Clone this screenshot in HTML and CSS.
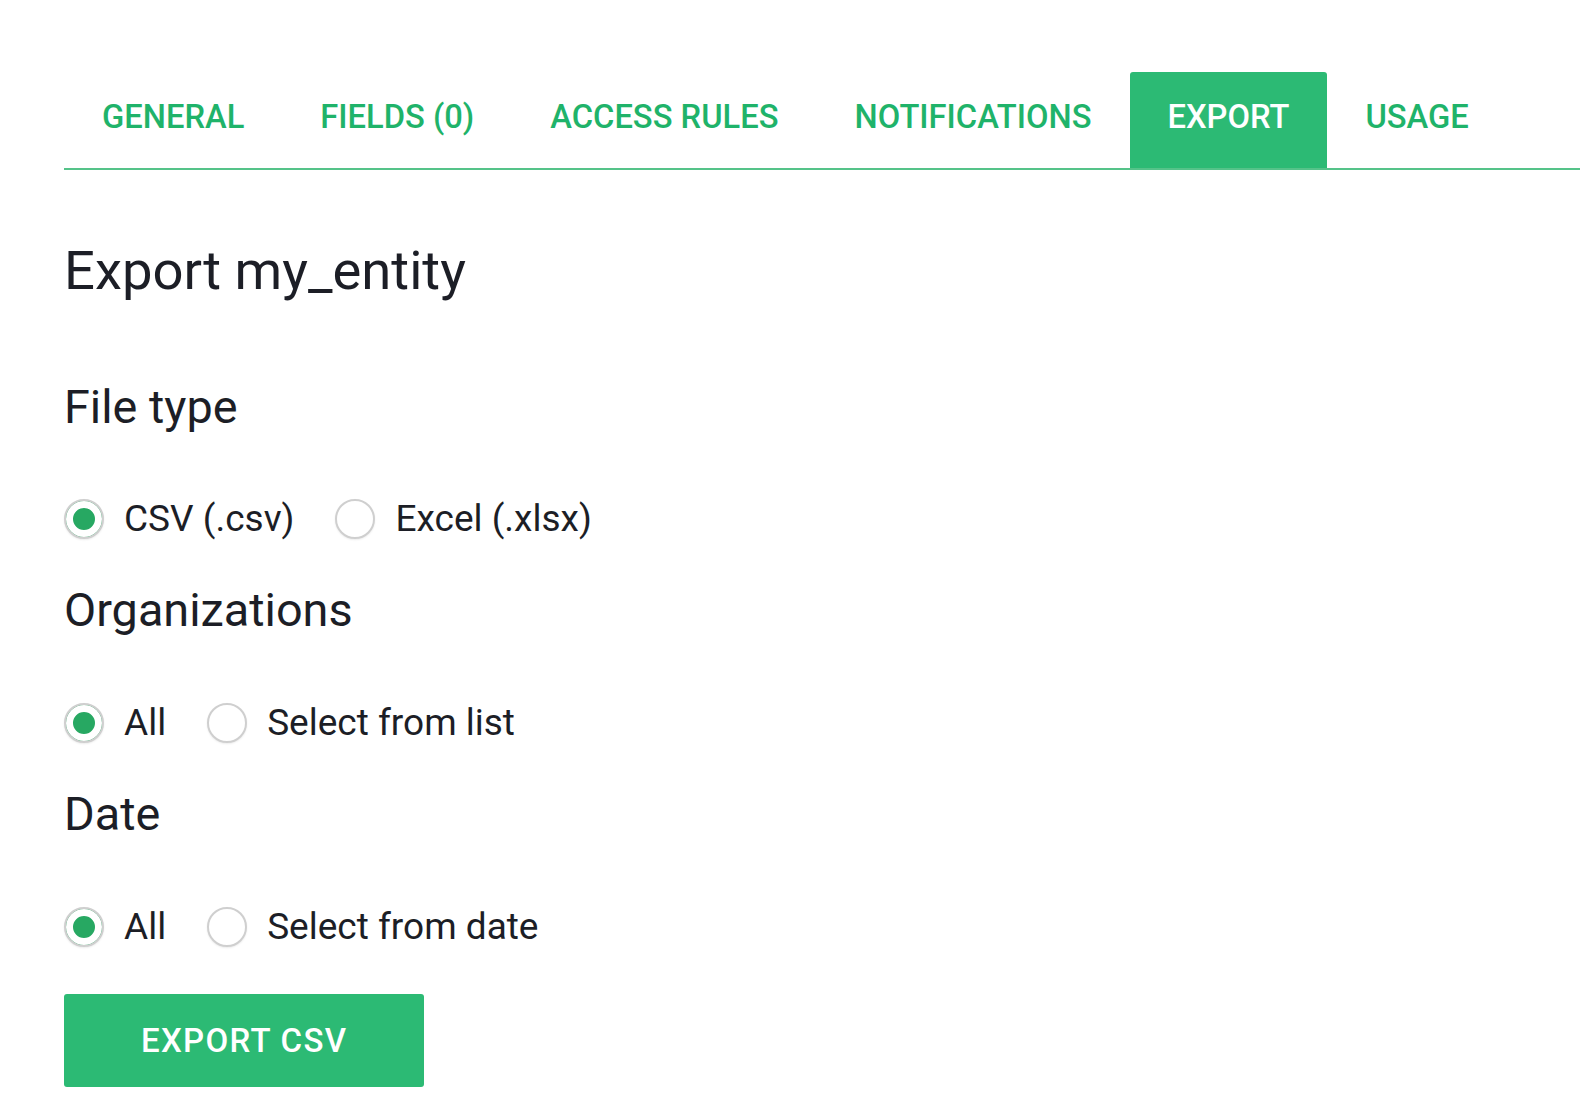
FILE: index.html
```html
<!DOCTYPE html>
<html lang="en">
<head>
    <meta charset="UTF-8">
    <meta name="viewport" content="width=device-width, initial-scale=1.0">
    <title>Export my_entity</title>
    <link rel="stylesheet" href="styles.css">
</head>
<body>
    <div class="page">
        <nav class="tabs">
            <a class="tab" href="#">General</a>
            <a class="tab" href="#">Fields (0)</a>
            <a class="tab" href="#">Access rules</a>
            <a class="tab" href="#">Notifications</a>
            <a class="tab active" href="#">Export</a>
            <a class="tab" href="#">Usage</a>
        </nav>

        <h1 class="title">Export my_entity</h1>

        <div class="section">
            <h2>File type</h2>
            <div class="options">
                <label class="option"><input type="radio" name="fileType" checked> CSV (.csv)</label>
                <label class="option"><input type="radio" name="fileType"> Excel (.xlsx)</label>
            </div>
        </div>

        <div class="section">
            <h2>Organizations</h2>
            <div class="options">
                <label class="option"><input type="radio" name="orgs" checked> All</label>
                <label class="option"><input type="radio" name="orgs"> Select from list</label>
            </div>
        </div>

        <div class="section">
            <h2>Date</h2>
            <div class="options">
                <label class="option"><input type="radio" name="date" checked> All</label>
                <label class="option"><input type="radio" name="date"> Select from date</label>
            </div>
        </div>

        <button class="btn">Export CSV</button>
    </div>
</body>
</html>
```

FILE: styles.css
```css
body {
    font-family: Roboto, "Liberation Sans", Arial, sans-serif;
    margin: 0;
    background-color: #fff;
    color: #1c1e26;
}
.page {
    padding-left: 64px;
}
.tabs {
    display: flex;
    margin-top: 72px;
    border-bottom: 2px solid #55c389;
}
.tab {
    height: 96px;
    line-height: 90px;
    padding: 0 38px 6px;
    box-sizing: border-box;
    font-size: 32.7px;
    font-weight: 500;
    text-transform: uppercase;
    text-decoration: none;
    color: #1fb36a;
    border-radius: 3px 3px 0 0;
}
.tab.active {
    background-color: #2cba74;
    color: #fff;
}
.title {
    margin: 69px 0 76px;
    font-size: 54.4px;
    font-weight: 400;
    line-height: 64px;
}
.section + .section {
    margin-top: 41px;
}
.section h2 {
    margin: 0;
    font-size: 46.8px;
    font-weight: 400;
    line-height: 56px;
}
.options {
    display: flex;
    gap: 41px;
    margin-top: 62px;
    height: 44px;
}
.section + .section .options {
    margin-top: 63px;
}
.option {
    display: flex;
    align-items: center;
    gap: 20px;
    font-size: 37px;
    line-height: 44px;
    cursor: pointer;
}
.option input {
    appearance: none;
    -webkit-appearance: none;
    width: 40px;
    height: 40px;
    margin: 0;
    border: 2px solid #cfcfcf;
    border-radius: 50%;
    background: #fff;
    box-shadow: 0 1px 2px rgba(0,0,0,0.08);
    cursor: pointer;
}
.option input:checked {
    background-color: #27a862;
    box-shadow: inset 0 0 0 7px #fff, 0 1px 2px rgba(0,0,0,0.08);
}
.btn {
    display: block;
    margin-top: 45px;
    height: 93px;
    padding: 0 77px;
    border: none;
    border-radius: 3px;
    background-color: #2cba74;
    color: #fff;
    font-family: inherit;
    font-size: 33px;
    font-weight: 500;
    letter-spacing: 1.3px;
    text-transform: uppercase;
    cursor: pointer;
}
```
